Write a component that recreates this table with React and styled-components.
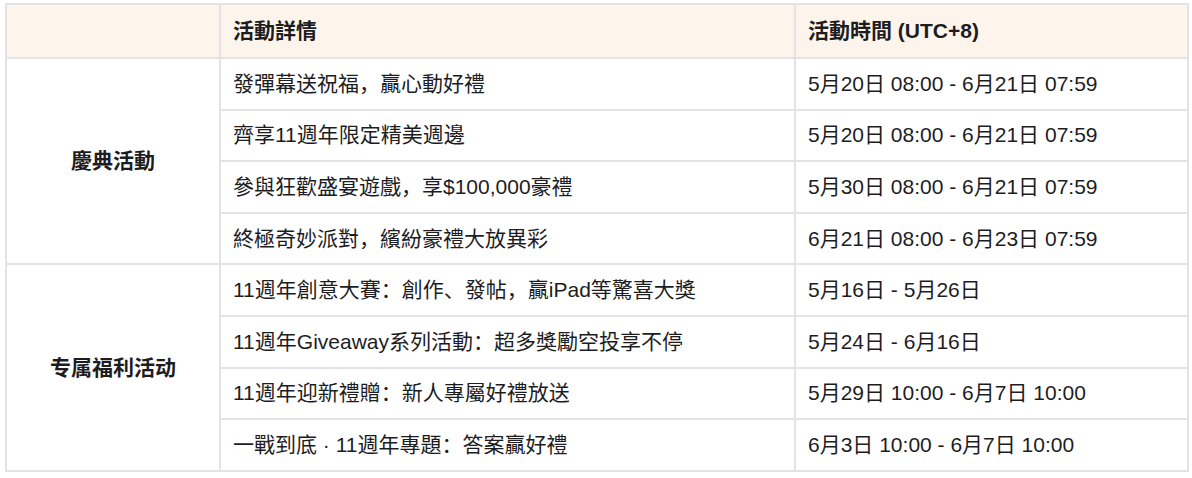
import React from 'react';
import styled, { createGlobalStyle } from 'styled-components';

const GlobalStyle = createGlobalStyle`
  html, body {
    margin: 0;
    padding: 0;
    background: #fff;
  }
  body {
    font-family: "Liberation Sans", "Noto Sans CJK SC", sans-serif;
    color: #1d1d1f;
  }
`;

const Page = styled.div`
  padding: 3px 5px;
`;

const Table = styled.table`
  width: 1182px;
  table-layout: fixed;
  border-collapse: collapse;
  border: 2px solid #e2e2e7;
  font-size: 21px;
  line-height: 24px;
`;

const HeadCell = styled.th`
  background: #fdf4eb;
  border: 2px solid #e2e2e7;
  padding: 14px 12px;
  text-align: left;
  font-weight: 700;
`;

const Cell = styled.td`
  border: 2px solid #e2e2e7;
  padding: 12.8px 12px;
  white-space: nowrap;
`;

const GroupCell = styled(Cell)`
  text-align: center;
  vertical-align: middle;
  font-weight: 700;
`;

const groups = [
  {
    name: '慶典活動',
    rows: [
      ['發彈幕送祝福，贏心動好禮', '5月20日 08:00 - 6月21日 07:59'],
      ['齊享11週年限定精美週邊', '5月20日 08:00 - 6月21日 07:59'],
      ['參與狂歡盛宴遊戲，享$100,000豪禮', '5月30日 08:00 - 6月21日 07:59'],
      ['終極奇妙派對，繽紛豪禮大放異彩', '6月21日 08:00 - 6月23日 07:59'],
    ],
  },
  {
    name: '专属福利活动',
    rows: [
      ['11週年創意大賽：創作、發帖，贏iPad等驚喜大獎', '5月16日 - 5月26日'],
      ['11週年Giveaway系列活動：超多獎勵空投享不停', '5月24日 - 6月16日'],
      ['11週年迎新禮贈：新人專屬好禮放送', '5月29日 10:00 - 6月7日 10:00'],
      ['一戰到底 · 11週年專題：答案贏好禮', '6月3日 10:00 - 6月7日 10:00'],
    ],
  },
];

export default function App() {
  return (
    <Page>
      <GlobalStyle />
      <Table>
        <colgroup>
          <col style={{ width: 214 }} />
          <col style={{ width: 575 }} />
          <col style={{ width: 393 }} />
        </colgroup>
        <thead>
          <tr>
            <HeadCell />
            <HeadCell>活動詳情</HeadCell>
            <HeadCell>活動時間 (UTC+8)</HeadCell>
          </tr>
        </thead>
        <tbody>
          {groups.map((g) =>
            g.rows.map((r, i) => (
              <tr key={g.name + i}>
                {i === 0 && <GroupCell rowSpan={g.rows.length}>{g.name}</GroupCell>}
                <Cell>{r[0]}</Cell>
                <Cell>{r[1]}</Cell>
              </tr>
            ))
          )}
        </tbody>
      </Table>
    </Page>
  );
}
